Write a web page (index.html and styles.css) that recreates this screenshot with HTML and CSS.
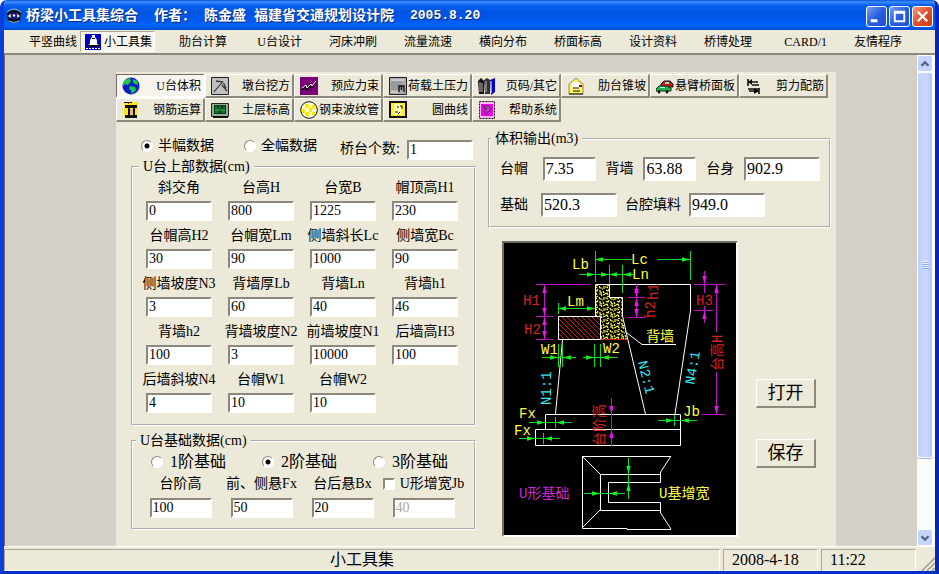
FILE: index.html
```
<!DOCTYPE html>
<html lang="zh-CN">
<head>
    <meta charset="UTF-8">
    <meta name="viewport" content="width=device-width, initial-scale=1.0">
    <title>桥梁小工具集综合</title>
    <link rel="stylesheet" href="styles.css">
</head>
<body>
<div class="window">
    <header class="titlebar">
        <svg class="logo" viewBox="0 0 16 16">
            <path d="M1 5 Q8 -1 15 5 L14 12 Q8 17 2 12z" fill="#111"/>
            <path d="M2 8 Q8 2 14 8 Q8 13 2 8z" fill="#fff"/>
            <circle cx="8" cy="8" r="3.4" fill="#15158c"/>
            <circle cx="8" cy="7.5" r="1.2" fill="#fff"/>
            <path d="M1 4 Q8 -2 15 4 M3 13 Q8 16 13 13" fill="none" stroke="#9ab" stroke-width="1"/>
        </svg>
        <h1><span>桥梁小工具集综合</span><span>作者：</span><span>陈金盛</span><span>福建省交通规划设计院</span><span>2005.8.20</span></h1>
        <div class="controls">
            <button type="button" class="ctl" aria-label="最小化"><svg viewBox="0 0 20 20"><path d="M4 13h7v3H4z" fill="#fff"/></svg></button>
            <button type="button" class="ctl" aria-label="最大化"><svg viewBox="0 0 20 20"><path d="M4 4h12v12H4z M6 7v7h8V7z" fill="#fff" fill-rule="evenodd"/></svg></button>
            <button type="button" class="ctl close" aria-label="关闭"><svg viewBox="0 0 20 20"><path d="M5 5l10 10M15 5L5 15" stroke="#fff" stroke-width="2.4"/></svg></button>
        </div>
    </header>

    <nav class="menu">
        <button type="button">平竖曲线</button>
        <button type="button" class="active">
            <svg viewBox="0 0 16 16"><path d="M0 0h16v16H0z" fill="#0000c8"/><path d="M7 1h3v2l2 3v4H5V6l2-3z" fill="#fff"/><path d="M7 4h3v1H7zM3 10h11v3H3z" fill="#111"/><path d="M4 10h9v1H4zM1 14h2v1H1zM4 14h2v1H4zM7 14h2v1H7zM10 14h2v1h-2zM13 14h2v1h-2z" fill="#fff"/></svg>小工具集</button>
        <button type="button">肋台计算</button>
        <button type="button">U台设计</button>
        <button type="button">河床冲刷</button>
        <button type="button">流量流速</button>
        <button type="button">横向分布</button>
        <button type="button">桥面标高</button>
        <button type="button">设计资料</button>
        <button type="button">桥博处理</button>
        <button type="button">CARD/1</button>
        <button type="button">友情程序</button>
    </nav>

    <div class="client">
        <main class="panel">
            <div class="toolbar">
                <button type="button" class="active">
                    <svg viewBox="0 0 18 18"><circle cx="9" cy="9" r="8.5" fill="#0a1fc0"/><path d="M3 3L8 1l1 3-3 4-3-1-2 2V6zM11 2l4 2 1 4-3-1-2-2zM8 9l5 1 1 3-4 4-1-4-2-1z" fill="#18d048"/></svg>U台体积</button>
                <button type="button">
                    <svg viewBox="0 0 18 18"><path d="M.5.5h17v17H.5z" fill="#c0c0c0" stroke="#222"/><path d="M3 15L12 5M5 4l7 1 3 6M11 8l5 6" fill="none" stroke="#333" stroke-width="1.3"/><path d="M4 15L13 5" stroke="#fff" stroke-width=".6"/></svg>墩台挖方</button>
                <button type="button">
                    <svg viewBox="0 0 18 18"><path d="M0 0h18v18H0z" fill="#7c0078"/><path d="M2 13l4-4 1 3 4-4 1 2 4-5" fill="none" stroke="#111" stroke-width="2"/><path d="M2 11l4-3 1 3 4-4 1 2 4-5" fill="none" stroke="#fff" stroke-width="1"/></svg>预应力束</button>
                <button type="button">
                    <svg viewBox="0 0 18 18"><path d="M.5.5h17v17H.5z" fill="#aaa" stroke="#222"/><path d="M2 2h11v11H2z" fill="#999"/><path d="M2 2h13v2H2z" fill="#c8c8c8"/><path d="M10 15V9h5v6M12.500 9v4" fill="none" stroke="#111" stroke-width="1.4"/><path d="M2 15h7" stroke="#eee"/></svg>荷载土压力</button>
                <button type="button">
                    <svg viewBox="0 0 18 18"><path d="M0 4l3-3 3 3v13H1z" fill="#111"/><path d="M6 3l3-2 3 2v14H7z" fill="#333"/><path d="M12 3l5-2v14l-4 3z" fill="#0000c8"/><path d="M2 5v10M8 4v11M4 6v9" stroke="#bbb"/><path d="M13 4v12M5 1h2" stroke="#fff"/></svg>页码/其它</button>
                <button type="button">
                    <svg viewBox="0 0 18 18"><path d="M2 7l7-6 7 6v10H2z" fill="#fff45a" stroke="#887"/><path d="M5 5h8v5l-4 3-4-3z" fill="#fff"/><path d="M2 17h14M6 11h6M6 14h7" stroke="#111"/><path d="M12 8h3v2h-3z" fill="#805"/></svg>肋台锥坡</button>
                <button type="button">
                    <svg viewBox="0 0 18 18"><path d="M5 7l3-3h6l3 3v3H5z" fill="#d01818" stroke="#111"/><path d="M9 5h4v2H9z" fill="#9dd"/><path d="M0 12l3-3h8l4 2v3H0z" fill="#20b050" stroke="#132"/><path d="M4 10h5v1H4z" fill="#cfe"/><circle cx="3" cy="15" r="1.4"/><circle cx="11" cy="15" r="1.4"/></svg>悬臂桥面板</button>
                <button type="button">
                    <svg viewBox="0 0 18 18"><path d="M3 2v7M3 5h10M7 8h7M3 12h11M14 11v6M4 14h9" fill="none" stroke="#111" stroke-width="1.6"/><path d="M7 2v6L3 5zM9 11v6l5-3z"/></svg>剪力配筋</button>
                <button type="button">
                    <svg viewBox="0 0 18 18"><path d="M2 1h14v16H2z" fill="#ffe818"/><path d="M2 1h8v1H2zM3 4h12v3H3zM6 7h2v7H6zM11 7h2v7h-2zM3 14h12v3H3z" fill="#111"/><path d="M8 8h3v5H8z" fill="#e8b0a0"/><path d="M6 3l2-2" stroke="#d33"/></svg>钢筋运算</button>
                <button type="button">
                    <svg viewBox="0 0 18 18"><path d="M.5 2.5h17v13H.5z" fill="#9aa89a" stroke="#222"/><path d="M3 4h12v9H3z" fill="#063c14"/><path d="M5 5v7M7 7v5M9 5v3M11 8v4M13 5v7M4 9h10" stroke="#3ce06a" stroke-width=".6"/><path d="M2 16h15" stroke="#111" stroke-width="2"/></svg>土层标高</button>
                <button type="button">
                    <svg viewBox="0 0 18 18"><circle cx="9" cy="9" r="8.3" fill="#ffffd8" stroke="#111"/><path d="M5 3h4v4H5zM12 4h3v4h-3zM2 8h3v4H2zM9 7h3v4H9zM5 11h4v4H5zM12 11h3v3h-3z" fill="#ffe800"/></svg>钢束波纹管</button>
                <button type="button">
                    <svg viewBox="0 0 18 18"><path d="M1 1h16v15H1z" fill="#ffee20" stroke="#111" stroke-width="2"/><path d="M5 3h8v11H5z" fill="#ffffb0"/><path d="M8 6h2M11 5h2v3M6 11h3M11 11l-2 2" stroke="#111" fill="none"/></svg>圆曲线</button>
                <button type="button">
                    <svg viewBox="0 0 18 18"><path d="M1.500 .5h15v17h-15z" fill="#ffb8ff" stroke="#111" stroke-dasharray="2 1"/><path d="M3 3h12v12H3z" fill="#f000e8"/><path d="M6 5h5l1 2v3l-3 1v2H7V9l2-1V7H6z" fill="#b050b0" stroke="#222" stroke-width=".6"/></svg>帮助系统</button>
            </div>

            <div class="content">
                <form class="left">
                    <div class="top-row">
                        <label class="choice"><input type="radio" name="width" checked>半幅数据</label>
                        <label class="choice"><input type="radio" name="width">全幅数据</label>
                        <label for="count" class="count-label">桥台个数:</label>
                        <input type="text" id="count" value="1">
                    </div>

                    <fieldset class="upper">
                        <legend>U台上部数据(cm)</legend>
                        <div class="cells">
                            <label>斜交角<input type="text" value="0"></label>
                            <label>台高H<input type="text" value="800"></label>
                            <label>台宽B<input type="text" value="1225"></label>
                            <label>帽顶高H1<input type="text" value="230"></label>
                            <label>台帽高H2<input type="text" value="30"></label>
                            <label>台帽宽Lm<input type="text" value="90"></label>
                            <label>侧墙斜长Lc<input type="text" value="1000"></label>
                            <label>侧墙宽Bc<input type="text" value="90"></label>
                            <label>侧墙坡度N3<input type="text" value="3"></label>
                            <label>背墙厚Lb<input type="text" value="60"></label>
                            <label>背墙Ln<input type="text" value="40"></label>
                            <label>背墙h1<input type="text" value="46"></label>
                            <label>背墙h2<input type="text" value="100"></label>
                            <label>背墙坡度N2<input type="text" value="3"></label>
                            <label>前墙坡度N1<input type="text" value="10000"></label>
                            <label>后墙高H3<input type="text" value="100"></label>
                            <label>后墙斜坡N4<input type="text" value="4"></label>
                            <label>台帽W1<input type="text" value="10"></label>
                            <label>台帽W2<input type="text" value="10"></label>
                        </div>
                    </fieldset>

                    <fieldset class="base">
                        <legend>U台基础数据(cm)</legend>
                        <div class="steps">
                            <label class="choice"><input type="radio" name="step">1阶基础</label>
                            <label class="choice"><input type="radio" name="step" checked>2阶基础</label>
                            <label class="choice"><input type="radio" name="step">3阶基础</label>
                        </div>
                        <div class="cells">
                            <label>台阶高<input type="text" value="100"></label>
                            <label>前、侧悬Fx<input type="text" value="50"></label>
                            <label>台后悬Bx<input type="text" value="20"></label>
                            <div class="cell">
                                <label class="choice"><input type="checkbox" id="jb">U形增宽Jb</label>
                                <input type="text" value="40" aria-label="U形增宽Jb" disabled>
                            </div>
                        </div>
                    </fieldset>
                </form>

                <section class="right">
                    <fieldset class="output">
                        <legend>体积输出(m3)</legend>
                        <div class="out-row">
                            <label for="o1">台帽</label><input type="text" id="o1" class="short" value="7.35">
                            <label for="o2">背墙</label><input type="text" id="o2" class="short" value="63.88">
                            <label for="o3">台身</label><input type="text" id="o3" value="902.9">
                        </div>
                        <div class="out-row">
                            <label for="o4">基础</label><input type="text" id="o4" value="520.3">
                            <label for="o5">台腔填料</label><input type="text" id="o5" value="949.0">
                        </div>
                    </fieldset>

                    <div class="drawing-row">
                        <svg class="drawing" viewBox="504 243 232 292">
                            <defs>
                                <path id="arr" d="M0 0L-8 -2.200V2.200z"/>
                                <pattern id="hatch" width="5" height="5" patternUnits="userSpaceOnUse">
                                    <path d="M0 0L5 5M-1 4L1 6M4 -1L6 1" stroke="#d81818"/>
                                </pattern>
                                <pattern id="stone" width="11" height="11" patternUnits="userSpaceOnUse">
                                    <path d="M0 1h2l1 1M5 0l1 2h2M10 0v3M1 4l2 1 1-2M6 4v2l2 1M0 8l2-1 1 2M5 8h2l1 2M9 5l1 2M9 9l2-1M4 10l-2 1M8 3h1" fill="none" stroke="#ffff3c" stroke-width="1.2"/>
                                </pattern>
                            </defs>
                            <path d="M502 241h236v296H502z" fill="#000"/>
                            <path d="M595 284h14v13h14v22l5 20h-27v-23h-6z" fill="url(#stone)"/>
                            <path d="M558 316h43v23h-43z" fill="url(#hatch)"/>
                            <path class="red-line" d="M601 339.500h26"/>
                            <g class="white">
                                <path d="M595.500 316V284.500H690.500V311L675 414M609.500 284v13.500h13V316l5 22 18 76"/>
                                <path d="M558.500 316.500h42v23h-42zM562.500 340L555.500 414"/>
                                <path d="M627 333l15 11.500h34"/>
                                <path d="M545.500 414.500h135v15h-135zM535.500 429.500h145v16h-145z"/>
                                <path d="M671 456.500h-88.500v72H627v1h44M582 456l18 18M582 528l18-18M671 456l-11 17M671 529l-11-17M660.500 472v10.500h-52v20h52v10.500M660 474.500h-59.500v36H660"/>
                            </g>
                            <g class="green">
                                <path d="M595 259.500h37M657 259.500h33M595.500 251v31M690.500 251v29M579 274.500h54M609.500 265v19M622.500 265v28"/>
                                <path d="M558 308.500h37M558.500 303v11M542 357.500h34M583 357.500h35M558.500 344v23M562.500 344v23M594.500 344v23M600.500 344v23"/>
                                <path d="M529 422.500h43M555.500 417v11M519 438.500h41M543.500 433v11M658 420.500h39M674.500 415v11"/>
                                <path d="M628.500 458v41M584 493.500h41"/>
                                <use href="#arr" transform="translate(595 259.500) rotate(180)"/><use href="#arr" x="690" y="259.500"/>
                                <use href="#arr" x="595" y="274.500"/><use href="#arr" x="609" y="274.500"/><use href="#arr" transform="translate(609 274.500) rotate(180)"/><use href="#arr" transform="translate(623 274.500) rotate(180)"/>
                                <use href="#arr" transform="translate(558 308.500) rotate(180)"/><use href="#arr" x="595" y="308.500"/>
                                <use href="#arr" x="558" y="357.500"/><use href="#arr" transform="translate(563 357.500) rotate(180)"/><use href="#arr" x="594" y="357.500"/><use href="#arr" transform="translate(601 357.500) rotate(180)"/>
                                <use href="#arr" x="545" y="422.500"/><use href="#arr" transform="translate(556 422.500) rotate(180)"/><use href="#arr" x="535" y="438.500"/><use href="#arr" transform="translate(544 438.500) rotate(180)"/>
                                <use href="#arr" x="674" y="420.500"/><use href="#arr" transform="translate(681 420.500) rotate(180)"/>
                                <use href="#arr" transform="translate(628.500 474) rotate(90)"/><use href="#arr" transform="translate(628.500 483) rotate(-90)"/><use href="#arr" x="600" y="493.500"/><use href="#arr" transform="translate(609 493.500) rotate(180)"/>
                            </g>
                            <g class="magenta">
                                <path d="M536 284.500h54M536 316.500h17M536 339.500h17M544.500 284v55M628 297.500h17M628 317.500h17M636.500 284v33"/>
                                <path d="M694 284.500h31M694 310.500h19M704.500 271v22M704.500 306v17M716.500 284v48M716.500 372v42M702 414.500h23M611.500 398v48"/>
                                <use href="#arr" transform="translate(544.500 285) rotate(-90)"/><use href="#arr" transform="translate(544.500 316) rotate(90)"/><use href="#arr" transform="translate(544.500 317) rotate(-90)"/><use href="#arr" transform="translate(544.500 339) rotate(90)"/>
                                <use href="#arr" transform="translate(636.500 285) rotate(-90)"/><use href="#arr" transform="translate(636.500 297) rotate(90)"/><use href="#arr" transform="translate(636.500 298) rotate(-90)"/><use href="#arr" transform="translate(636.500 317) rotate(90)"/>
                                <use href="#arr" transform="translate(704.500 284) rotate(90)"/><use href="#arr" transform="translate(704.500 311) rotate(-90)"/><use href="#arr" transform="translate(716.500 285) rotate(-90)"/><use href="#arr" transform="translate(716.500 414) rotate(90)"/>
                                <use href="#arr" transform="translate(611.500 414) rotate(90)"/><use href="#arr" transform="translate(611.500 430) rotate(-90)"/>
                            </g>
                            <g class="t-yellow">
                                <text x="631" y="264">Lc</text><text x="572" y="269">Lb</text><text x="632" y="279">Ln</text>
                                <text x="567" y="306">Lm</text><text x="541" y="354">W1</text><text x="603" y="353">W2</text>
                                <text x="519" y="418">Fx</text><text x="514" y="435">Fx</text><text x="683" y="416">Jb</text>
                                <text x="646" y="341">背墙</text><text x="659" y="498">U基增宽</text>
                            </g>
                            <g class="t-red">
                                <text x="523" y="305">H1</text><text x="524" y="334">H2</text><text x="696" y="305">H3</text>
                                <text transform="translate(658 300) rotate(-90)">h1</text><text transform="translate(655 318) rotate(-90)">h2</text>
                                <text transform="translate(722 371) rotate(-90)">台高H</text><text transform="translate(604 446) rotate(-90)">台阶高</text>
                            </g>
                            <g class="t-cyan">
                                <text transform="translate(551 405) rotate(-90)">N1:1</text>
                                <text transform="translate(638 362) rotate(76)">N2:1</text>
                                <text transform="translate(694 385) rotate(-80)">N4:1</text>
                            </g>
                            <text class="t-purple" x="519" y="498">U形基础</text>
                        </svg>
                        <div class="actions">
                            <button type="button">打开</button>
                            <button type="button">保存</button>
                        </div>
                    </div>
                </section>
            </div>
        </main>

        <div class="scrollbar">
            <button type="button" aria-label="向上"><svg viewBox="0 0 16 16"><path d="M4 10l4-4 4 4" fill="none" stroke="#4d6185" stroke-width="2.600"/></svg></button>
            <div class="thumb"><i></i></div>
            <div class="track"></div>
            <button type="button" aria-label="向下"><svg viewBox="0 0 16 16"><path d="M4 6l4 4 4-4" fill="none" stroke="#4d6185" stroke-width="2.600"/></svg></button>
        </div>
    </div>

    <footer class="status">
        <div class="message">小工具集</div>
        <div class="slot">2008-4-18</div>
        <div class="slot">11:22</div>
        <svg class="grip" viewBox="0 0 16 16"><path d="M3 16L16 3M8 16l8-8M13 16l3-3" stroke="#aca899" stroke-width="1.800"/><path d="M5 16L16 5M10 16l6-6" stroke="#fff"/></svg>
    </footer>
</div>
</body>
</html>
```
FILE: styles.css
```
*{
    box-sizing: border-box;
}
body{
    margin: 0;
    background: #fff;
    color: #000;
    font-family: "Liberation Serif", "Noto Sans CJK SC", serif;
    font-size: 14px;
    line-height: 16px;
}
button, input{
    font: inherit;
    color: inherit;
    margin: 0;
}
svg{
    display: block;
    flex: none;
}
.window{
    display: flex;
    flex-direction: column;
    min-height: 100vh;
    border: 4px solid #0a3fdc;
    border-top: 0;
    border-right-color: #0527b4;
    border-bottom: 3px solid #0730c4;
    border-radius: 7px 7px 0 0;
    background: #ece9d8;
    overflow: hidden;
}

/* title bar */
.titlebar{
    display: flex;
    align-items: center;
    height: 30px;
    margin: 0 -4px;
    padding: 2px 6px 0 6px;
    background: linear-gradient(#0a50d8 0, #3c90ff 2px, #0a60ee 5px, #0054e3 12px, #0058ec 20px, #0066ff 26px, #0048cc 30px);
}
.logo{
    width: 16px;
    height: 16px;
}
.titlebar h1{
    flex: 1;
    display: flex;
    margin: 0 0 0 4px;
    color: #fff;
    font: bold 14px "Liberation Mono", "Noto Sans CJK SC", monospace;
    line-height: 20px;
    white-space: nowrap;
    text-shadow: 1px 1px #0a2a80;
}
.titlebar h1 span{
    width: 50px;
}
.titlebar h1 span:nth-child(1){
    width: 128px;
}
.titlebar h1 span:nth-child(4){
    width: 156px;
}
.titlebar h1 span:last-child{
    font-size: 13px;
}
.controls{
    display: flex;
    gap: 2px;
}
.ctl{
    width: 21px;
    height: 21px;
    padding: 0;
    border: 1px solid #fff;
    border-radius: 3px;
    background: linear-gradient(135deg, #7a9ef0, #2a5ee0 50%, #2050d0);
}
.ctl.close{
    background: linear-gradient(135deg, #f09a80, #e0502a 50%, #c83c14);
}

/* menu */
.menu{
    display: flex;
    height: 25px;
    padding: 1px 0 1px 1px;
    border-bottom: 2px solid #8c897c;
    font-size: 12px;
}
.menu button{
    display: flex;
    align-items: center;
    justify-content: flex-end;
    flex: 0 0 75px;
    padding: 0 2px 0 0;
    border: 1px solid transparent;
    background: none;
    white-space: nowrap;
}
.menu .active{
    border-color: #aca899 #fff #fff #aca899;
    background: #f6f4ec;
}
.menu svg{
    width: 16px;
    height: 16px;
    margin-right: 3px;
}

/* client area */
.client{
    flex: 1;
    display: flex;
    justify-content: space-between;
    border-left: 1px solid #716f64;
    background: #d4d0c8;
}
.panel{
    flex: 0 0 720px;
    margin: 17px 0 0 111px;
    padding: 2px 0 9px;
    background: #ece9d8;
}
.toolbar{
    display: grid;
    grid-template-columns: repeat(8, 89px);
    font-size: 12px;
}
.toolbar button{
    display: flex;
    align-items: center;
    justify-content: space-between;
    height: 24px;
    padding: 0 2px 0 5px;
    border: 1px solid;
    border-width: 1px 2px 2px 1px;
    border-color: #fff #8c897c #8c897c #fff;
    background: #ece9d8;
    white-space: nowrap;
}
.toolbar .active{
    border-color: #716f64 #fff #fff #716f64;
    background: #f6f4ec;
}
.toolbar svg{
    width: 18px;
    height: 18px;
}
.content{
    display: flex;
    gap: 12px;
    padding-left: 15px;
}
.left{
    width: 345px;
    padding-top: 16px;
}
.right{
    width: 343px;
    padding-top: 10px;
}

/* fields */
input[type="text"]{
    width: 66px;
    height: 20px;
    padding: 0 1px;
    border: 2px solid;
    border-color: #8c897c #fff #fff #8c897c;
    background: #fff;
    outline: 0;
}
input[type="text"]:disabled{
    color: #aca899;
}
input[type="radio"], input[type="checkbox"]{
    appearance: none;
    width: 12px;
    height: 12px;
    border: 2px solid;
    border-color: #8c897c #fff #fff #8c897c;
    background: #fff;
}
input[type="radio"]{
    border-width: 1px;
    border-radius: 50%;
}
input[type="radio"]:checked{
    background: radial-gradient(#000 0 2px, #fff 3px);
}
.choice{
    display: flex;
    align-items: center;
    gap: 5px;
    white-space: nowrap;
}
.top-row{
    display: flex;
    align-items: flex-end;
    height: 22px;
    padding-left: 10px;
}
.top-row .choice{
    flex: 0 0 103px;
    align-self: flex-start;
}
.top-row .choice + .choice{
    flex-basis: 96px;
}
.count-label{
    width: 63px;
    margin: 0 4px 3px 0;
    white-space: nowrap;
}
fieldset{
    min-width: 0;
    margin: 0;
    border: 2px groove #fff;
}
legend{
    padding: 0 4px;
    line-height: 14px;
}
.upper{
    padding: 6px 4px 11px;
}
.base{
    margin-top: 8px;
    padding: 5px 7px 10px;
}
.upper legend{
    margin-left: 2px;
}
.base legend{
    margin-left: -4px;
}
.cells{
    display: grid;
    grid-template-columns: repeat(4, 82px);
    gap: 7px 0;
    margin-left: 1px;
}
.cells > *{
    display: flex;
    flex-direction: column;
    align-items: center;
    gap: 5px;
    white-space: nowrap;
}
.base .cells{
    grid-template-columns: repeat(4, 81px);
    margin: 5px 0 0;
}
.base .cells > *{
    gap: 6px;
}
.base .cells .choice{
    flex-direction: row;
    gap: 5px;
}
.base input[type="text"]{
    width: 62px;
}
.steps{
    display: grid;
    grid-template-columns: repeat(3, 111px);
    padding-left: 11px;
    font-size: 16px;
    line-height: 18px;
}
.steps .choice{
    gap: 7px;
}

/* results */
.output{
    padding: 11px 9px 9px 10px;
}
.output legend{
    margin-left: -9px;
}
.out-row{
    display: flex;
    align-items: center;
    justify-content: space-between;
}
.out-row + .out-row{
    justify-content: flex-start;
    gap: 8px;
    margin-top: 12px;
}
.out-row input[type="text"]{
    width: 76px;
    height: 24px;
    font-size: 16px;
}
.out-row .short[type="text"]{
    width: 53px;
}
.out-row label:first-child{
    width: 33px;
}
.drawing-row{
    display: flex;
    gap: 18px;
    margin: 13px 0 0 14px;
}
.drawing{
    width: 236px;
    height: 296px;
    border: 2px solid;
    border-color: #716f64 #fff #fff #716f64;
}
.drawing text{
    font: 14px "Liberation Mono", "Noto Sans CJK SC", monospace;
}
.white path{
    fill: none;
    stroke: #fff;
}
.red-line{
    stroke: #d81818;
}
.green{
    fill: #10f020;
    stroke: none;
}
.green > path{
    fill: none;
    stroke: #10d820;
}
.magenta{
    fill: #f010f0;
}
.magenta > path{
    fill: none;
    stroke: #c010c8;
}
.t-yellow{
    fill: #ffff40;
}
.t-red{
    fill: #d82020;
}
.t-cyan{
    fill: #30e8f0;
}
.t-purple{
    fill: #c828d8;
}
.actions{
    display: flex;
    flex-direction: column;
    gap: 31px;
    padding-top: 138px;
}
.actions button{
    width: 60px;
    height: 29px;
    padding: 0;
    border: 1px solid;
    border-width: 1px 2px 2px 1px;
    border-color: #fff #8c897c #8c897c #fff;
    background: #ece9d8;
    font-size: 18px;
    line-height: 24px;
}

/* scrollbar */
.scrollbar{
    display: flex;
    flex-direction: column;
    width: 18px;
    padding-right: 2px;
    background: #fbfbf8;
}
.scrollbar button{
    flex: none;
    height: 17px;
    padding: 0;
    border: 1px solid #fff;
    border-radius: 3px;
    background: #c4d4fa;
}
.thumb{
    flex: 385;
    display: flex;
    align-items: center;
    justify-content: center;
    border: 1px solid #fff;
    border-radius: 3px;
    background: linear-gradient(90deg, #c0d2fc, #c8d8ff 60%, #b0c4f4);
    box-shadow: 0 1px #9ab4e8;
}
.thumb i{
    width: 7px;
    height: 8px;
    background: repeating-linear-gradient(#eef4ff 0 1px, #8cb0f8 1px 2px);
}
.track{
    flex: 71;
}

/* status bar */
.status{
    display: flex;
    gap: 3px;
    height: 25px;
    padding-top: 2px;
    border-top: 1px solid #fff;
    font-size: 16px;
    line-height: 20px;
}
.status > div{
    border: 1px solid;
    border-color: #aca899 #fff #fff #aca899;
}
.message{
    flex: 1;
    text-align: center;
}
.slot{
    width: 95px;
    padding-left: 8px;
}
.grip{
    width: 16px;
    height: 16px;
    align-self: flex-end;
}
```
